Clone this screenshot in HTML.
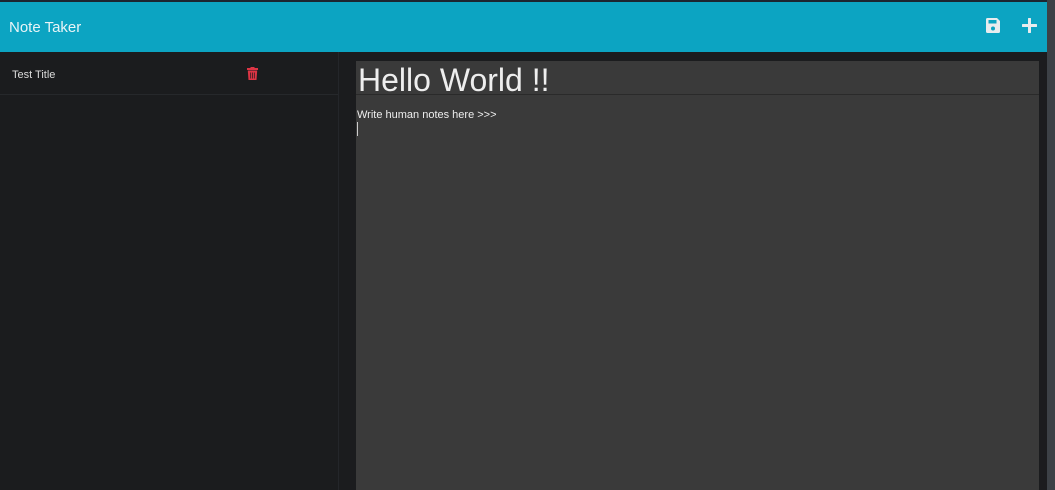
<!DOCTYPE html>
<html><head><style>
*{margin:0;padding:0;box-sizing:border-box}
body{width:1055px;height:490px;background:#1b1c1e;overflow:hidden;position:relative;font-family:"Liberation Sans",sans-serif}
.top{position:absolute;left:0;top:0;width:1055px;height:2px;background:#1c2530}
.nav{position:absolute;left:0;top:2px;width:1047px;height:50px;background:#0ca4c2}
.nav .t{position:absolute;left:9px;top:17px;font-size:15px;color:#e8f4f7}
.rs{position:absolute;left:1047px;top:0;width:8px;height:490px;background:#3c4146}
.side{position:absolute;left:0;top:52px;width:339px;height:438px;background:#1b1c1e;border-right:1px solid #24262a}
.item{height:43px;border-bottom:1px solid #26282b;position:relative}
.item span{position:absolute;left:12px;top:17px;color:#dcdcdc;font-size:11px}
.ed{position:absolute;left:356px;top:61px;width:683px;height:429px;background:#3a3a3a}
.ti{height:34px;border-bottom:1px solid #2a2a2a;color:#eee;font-size:32px;padding-left:2px;line-height:38px}
.bd{color:#eee;font-size:11px;padding:14px 0 0 1px}
.cur{position:absolute;left:1px;top:61px;width:1px;height:14px;background:#ccc}
</style></head><body>
<div class="top"></div>
<div class="nav"><div class="t">Note Taker</div>
<svg style="position:absolute;left:986px;top:16px" width="14" height="15" viewBox="0 0 14 15"><path d="M0 1.5Q0 0 1.5 0H11L14 3V13.5Q14 15 12.5 15H1.5Q0 15 0 13.5Z" fill="#e8ecee"/><rect x="2.5" y="2" width="8" height="3.5" fill="#0ca4c2"/><circle cx="7" cy="10.5" r="2" fill="#0ca4c2"/></svg>
<svg style="position:absolute;left:1022px;top:16px" width="15" height="15" viewBox="0 0 15 15"><path d="M7.5 1V14M1 7.5H14" stroke="#e8ecee" stroke-width="3" stroke-linecap="round"/></svg>
</div>
<div class="rs"></div>
<div class="side"><div class="item"><span>Test Title</span>
<svg style="position:absolute;left:247px;top:15px" width="11" height="13" viewBox="0 0 11 13"><rect x="0" y="1" width="11" height="2" fill="#dc3545"/><rect x="3.5" y="0" width="4" height="2" fill="#dc3545"/><path d="M0.8 3.5H10.2L9.5 13H1.5Z" fill="#dc3545"/><path d="M3.7 5.5V11.5M5.5 5.5V11.5M7.3 5.5V11.5" stroke="#1b1c1e" stroke-width="0.7"/></svg>
</div></div>
<div class="ed"><div class="ti">Hello World !!</div><div class="bd">Write human notes here &gt;&gt;&gt;</div><div class="cur"></div></div>
</body></html>
